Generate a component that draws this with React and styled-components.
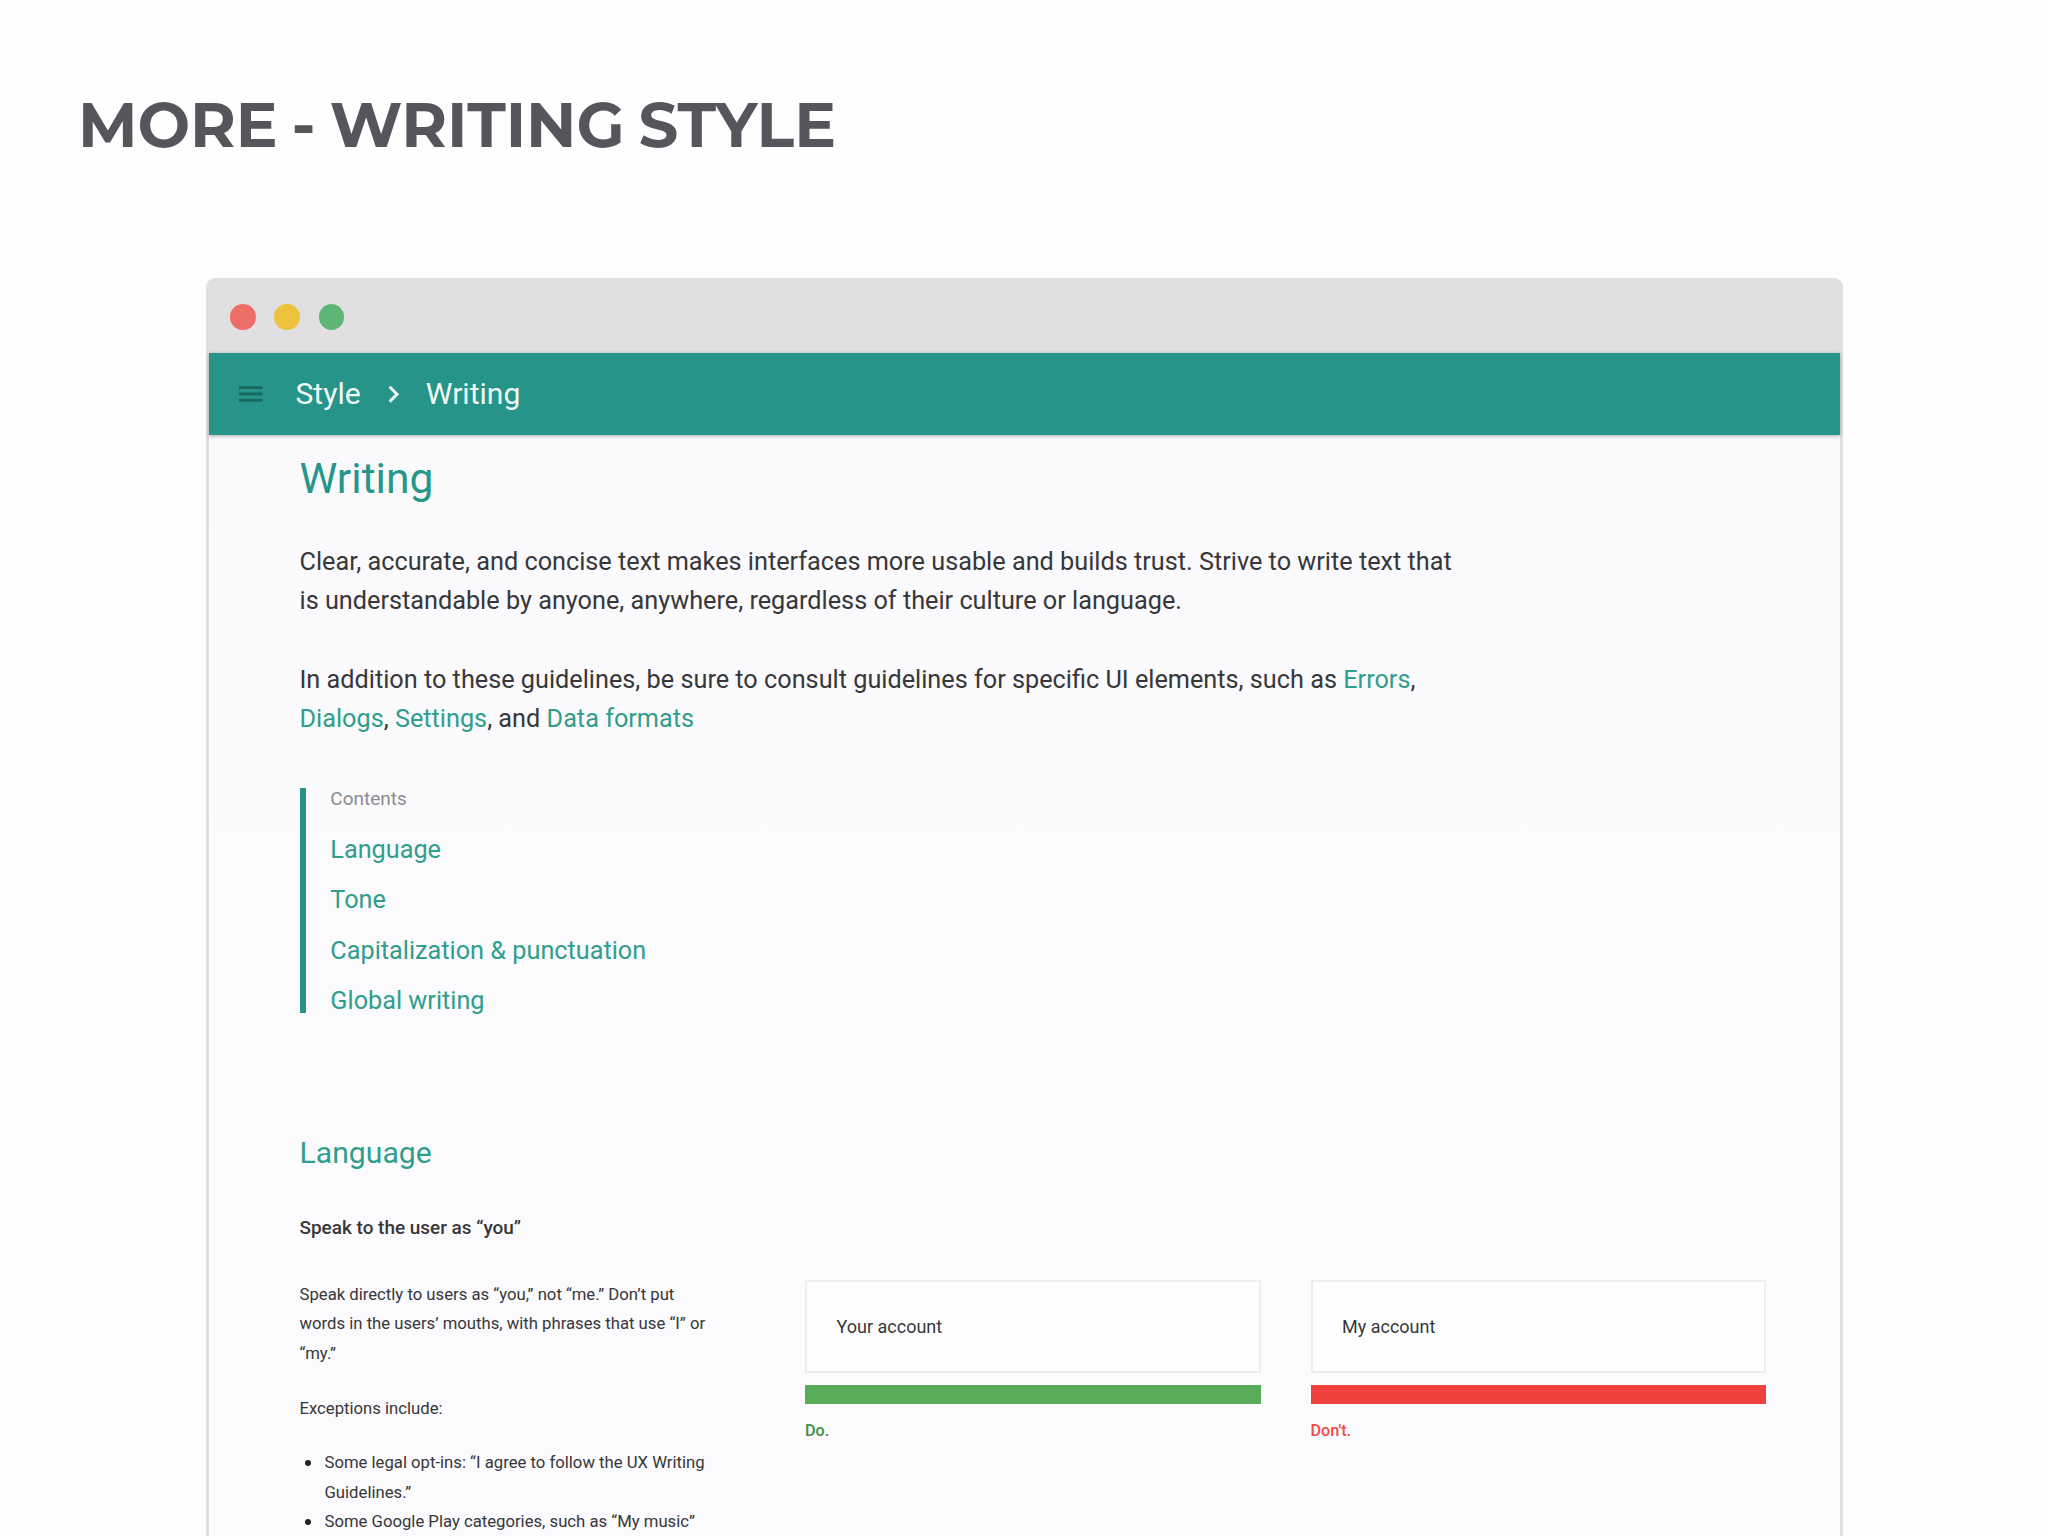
import styled, { createGlobalStyle } from "styled-components";

const contents = ["Language", "Tone", "Capitalization & punctuation", "Global writing"];

const exceptions = [
  "Some legal opt-ins: “I agree to follow the UX Writing Guidelines.”",
  "Some Google Play categories, such as “My music”",
];

const examples = [
  { text: "Your account", verdict: "Do.", bar: "#58ab58", color: "#3f8f45" },
  { text: "My account", verdict: "Don't.", bar: "#ef423e", color: "#f04a48" },
];

const MenuIcon = () => (
  <svg width="24" height="17" viewBox="0 0 24 17" fill="#17695f">
    <rect x="0" y="0.2" width="23.5" height="2.8" />
    <rect x="0" y="6.5" width="23.5" height="2.8" />
    <rect x="0" y="12.9" width="23.5" height="2.8" />
  </svg>
);

const ChevronIcon = () => (
  <svg width="12" height="19" viewBox="0 0 12 19" fill="none" stroke="#effaf8" strokeWidth="3">
    <path d="M1.6 1.8 L9 9.2 L1.6 16.6" />
  </svg>
);

const App = () => {
  return (
    <Slide>
      <GlobalStyle />
      <SlideTitle>MORE - WRITING STYLE</SlideTitle>
      <Browser>
        <TitleBar>
          <Dot $color="#ec6e66" />
          <Dot $color="#edc23c" />
          <Dot $color="#5fb575" />
        </TitleBar>
        <Toolbar>
          <MenuIcon />
          <Crumb>Style</Crumb>
          <ChevronIcon />
          <Crumb>Writing</Crumb>
        </Toolbar>
        <Page>
          <PageTitle>Writing</PageTitle>
          <Lead>
            Clear, accurate, and concise text makes interfaces more usable and builds trust. Strive to
            write text that is understandable by anyone, anywhere, regardless of their culture or
            language.
          </Lead>
          <Lead>
            In addition to these guidelines, be sure to consult guidelines for specific UI elements,
            such as <Link>Errors</Link>, <Link>Dialogs</Link>, <Link>Settings</Link>, and{" "}
            <Link>Data formats</Link>
          </Lead>
          <Contents>
            <ContentsLabel>Contents</ContentsLabel>
            {contents.map((item) => (
              <ContentsItem key={item}>{item}</ContentsItem>
            ))}
          </Contents>
          <SectionTitle>Language</SectionTitle>
          <SubTitle>Speak to the user as “you”</SubTitle>
          <Columns>
            <Copy>
              <p>
                Speak directly to users as “you,” not “me.” Don’t put words in the users’ mouths, with
                phrases that use “I” or “my.”
              </p>
              <p>Exceptions include:</p>
              <ul>
                {exceptions.map((item) => (
                  <Exception key={item}>{item}</Exception>
                ))}
              </ul>
            </Copy>
            {examples.map(({ text, verdict, bar, color }) => (
              <Example key={verdict}>
                <ExampleCard>{text}</ExampleCard>
                <ExampleBar $color={bar} />
                <Verdict $color={color}>{verdict}</Verdict>
              </Example>
            ))}
          </Columns>
        </Page>
      </Browser>
    </Slide>
  );
};

const GlobalStyle = createGlobalStyle`
  * {
    box-sizing: border-box;
    margin: 0;
    padding: 0;
  }

  body {
    background: #fefefe;
    overflow: hidden;
  }
`;

const Slide = styled.div`
  display: flex;
  flex-direction: column;
  width: 2048px;
  height: 1536px;
  overflow: hidden;
  font-family: Roboto, "Liberation Sans", sans-serif;
  color: #37373a;
`;

const SlideTitle = styled.h1`
  flex-shrink: 0;
  padding: 85px 0 0 78px;
  font-family: Montserrat, Inter, sans-serif;
  font-size: 62.4px;
  font-weight: 700;
  line-height: 80px;
  letter-spacing: -0.1px;
  word-spacing: -3.5px;
  color: #55565b;
`;

const Browser = styled.div`
  flex-shrink: 0;
  width: 1637px;
  height: 1400px;
  margin: 113px 0 0 206px;
  overflow: hidden;
  border-radius: 9px 9px 0 0;
  background: #e0e0e2;
`;

const TitleBar = styled.div`
  display: flex;
  align-items: center;
  gap: 18.8px;
  height: 75px;
  padding: 3px 0 0 24px;
`;

const Dot = styled.span`
  width: 25.5px;
  height: 25.5px;
  border-radius: 50%;
  background: ${(p) => p.$color};
`;

const Toolbar = styled.div`
  position: relative;
  display: flex;
  align-items: center;
  height: 82px;
  margin: 0 3px;
  padding-left: 30px;
  background: #269488;
  box-shadow: 0 1px 4px rgba(60, 60, 70, 0.4);

  svg:nth-of-type(2) {
    margin: 0 26px 0 27px;
  }
`;

const Crumb = styled.span`
  padding-bottom: 2px;
  font-size: 30.1px;
  color: #effaf8;

  svg:first-child + & {
    margin-left: 32.5px;
  }
`;

const Page = styled.main`
  height: 1240px;
  margin: 0 3px;
  padding: 15px 0 0 90.5px;
  background: linear-gradient(#fafafc, #fbfafc 400px);
`;

const PageTitle = styled.h2`
  margin-bottom: 36px;
  font-size: 42.6px;
  font-weight: 400;
  line-height: 56px;
  color: #27968a;
`;

const Lead = styled.p`
  width: 1165px;
  margin-bottom: 39.3px;
  font-size: 25.25px;
  line-height: 39.25px;
`;

const Link = styled.a`
  color: #309e8c;
`;

const Contents = styled.nav`
  display: flex;
  flex-direction: column;
  height: 225px;
  margin-top: 50px;
  padding-left: 24.8px;
  border-left: 6px solid #269488;
`;

const ContentsLabel = styled.span`
  margin-bottom: 25.6px;
  font-size: 19px;
  line-height: 22px;
  color: #8c8c8f;
`;

const ContentsItem = styled.a`
  margin-bottom: 22.4px;
  font-size: 25.25px;
  line-height: 28px;
  color: #309e8c;
`;

const SectionTitle = styled.h3`
  margin-top: 120px;
  font-size: 30.2px;
  font-weight: 400;
  line-height: 40px;
  color: #309e8c;
`;

const SubTitle = styled.h4`
  margin-top: 39.6px;
  font-size: 18.95px;
  font-weight: 500;
  line-height: 30px;
`;

const Columns = styled.div`
  display: grid;
  grid-template-columns: 412px 455.5px 455.5px;
  column-gap: 50px;
  margin-top: 37.2px;
`;

const Copy = styled.div`
  font-size: 16.7px;
  line-height: 29.3px;

  p {
    margin-bottom: 25.6px;
  }

  ul {
    list-style: none;
  }
`;

const Exception = styled.li`
  display: flex;
  padding-left: 5.5px;

  &::before {
    content: "";
    flex: none;
    width: 6px;
    height: 6px;
    margin: 12px 13.5px 0 0;
    border-radius: 50%;
    background: #222224;
  }
`;

const Example = styled.div`
  display: flex;
  flex-direction: column;
  margin-left: 43.5px;
  margin-right: -43.5px;
`;

const ExampleCard = styled.div`
  display: flex;
  align-items: center;
  height: 93px;
  padding: 0 0 1px 29.5px;
  border: 2px solid #efedf1;
  background: #fefefe;
  font-size: 18px;
`;

const ExampleBar = styled.div`
  height: 19px;
  margin: 12px 0;
  background: ${(p) => p.$color};
`;

const Verdict = styled.span`
  font-size: 16.2px;
  font-weight: 500;
  line-height: 29.3px;
  color: ${(p) => p.$color};
`;

export default App;
